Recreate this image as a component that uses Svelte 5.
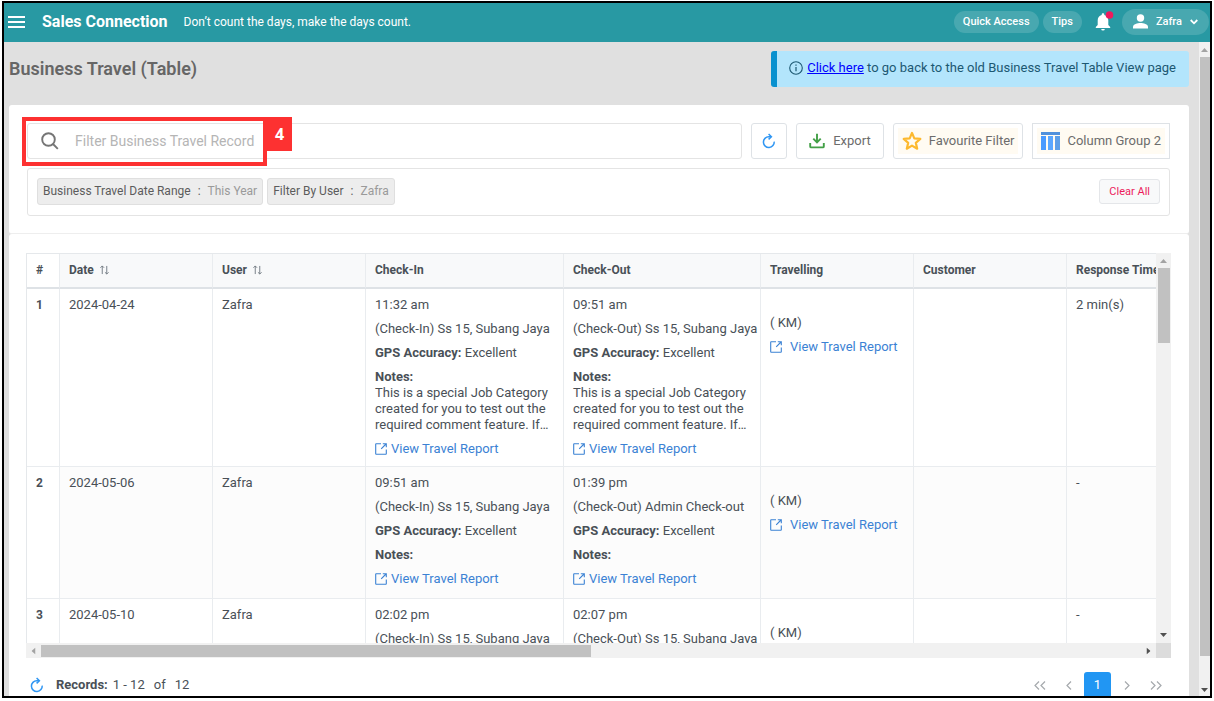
<script>
  const columns = [
    { label: '#', width: 33 },
    { label: 'Date', width: 153, sortable: true },
    { label: 'User', width: 153, sortable: true },
    { label: 'Check-In', width: 198 },
    { label: 'Check-Out', width: 197 },
    { label: 'Travelling', width: 153 },
    { label: 'Customer', width: 153 },
    { label: 'Response Time', width: 153 }
  ];

  const note = ['This is a special Job Category', 'created for you to test out the', 'required comment feature. If…'];

  const rows = [
    {
      id: 1, date: '2024-04-24', user: 'Zafra', response: '2 min(s)',
      visits: [
        { time: '11:32 am', place: '(Check-In) Ss 15, Subang Jaya', note },
        { time: '09:51 am', place: '(Check-Out) Ss 15, Subang Jaya', note }
      ]
    },
    {
      id: 2, date: '2024-05-06', user: 'Zafra', response: '-',
      visits: [
        { time: '09:51 am', place: '(Check-In) Ss 15, Subang Jaya', note: [] },
        { time: '01:39 pm', place: '(Check-Out) Admin Check-out', note: [] }
      ]
    },
    {
      id: 3, date: '2024-05-10', user: 'Zafra', response: '-',
      visits: [
        { time: '02:02 pm', place: '(Check-In) Ss 15, Subang Jaya', note: [] },
        { time: '02:07 pm', place: '(Check-Out) Ss 15, Subang Jaya', note: [] }
      ]
    }
  ];

  const filters = [
    { name: 'Business Travel Date Range', value: 'This Year' },
    { name: 'Filter By User', value: 'Zafra' }
  ];

  let query = $state('');
</script>

{#snippet refreshIcon()}
  <svg width="14" height="16" viewBox="0 0 14 16" fill="none" stroke="#2f96f3" stroke-width="1.5" aria-hidden="true">
    <path d="M12.2 8.6A5.4 5.4 0 1 1 6.8 3.7H9" />
    <path d="M6.6 1 9.4 3.7 6.6 6.4" />
  </svg>
{/snippet}

{#snippet externalIcon()}
  <svg width="12" height="12" viewBox="0 0 12 12" fill="none" stroke="currentColor" stroke-width="1.1" aria-hidden="true">
    <path d="M6 .8H1.2a.5.5 0 0 0-.5.5v9.5a.5.5 0 0 0 .5.5h9.6a.5.5 0 0 0 .5-.5V6.5" />
    <path d="M7.8.8h3.5v3.5M11 1 6.2 5.8" />
  </svg>
{/snippet}

{#snippet arrow(dir, tone)}
  <svg class="arrow {dir}" width="7" height="4" viewBox="0 0 7 4" fill={tone} aria-hidden="true"><path d="M0 4 3.5 0 7 4z" /></svg>
{/snippet}

{#snippet visit(v)}
  <div class="visit">
    <p>{v.time}</p>
    <p>{v.place}</p>
    <p><b>GPS Accuracy:</b> Excellent</p>
    <div>
      <p><b>Notes:</b></p>
      {#each v.note as line}
        <p>{line}</p>
      {/each}
    </div>
    <a class="report" href="#report">{@render externalIcon()}View Travel Report</a>
  </div>
{/snippet}

<div class="frame">
  <header class="topbar">
    <button class="plain" aria-label="Menu">
      <svg width="17" height="12" viewBox="0 0 17 12" fill="#fff"><path d="M0 0h17v2H0zM0 5h17v2H0zM0 10h17v2H0z" /></svg>
    </button>
    <strong class="brand">Sales Connection</strong>
    <span class="tagline">Don’t count the days, make the days count.</span>
    <nav>
      <button class="pill">Quick Access</button>
      <button class="pill">Tips</button>
      <button class="plain bell" aria-label="Notifications">
        <svg width="20" height="22" viewBox="0 0 20 22">
          <path fill="#fff" d="M9 2.200c.8 0 1.300.5 1.300 1.200v.7c2.700.6 4 2.800 4 5.300v4.600l1.900 2v1H1.800v-1l1.900-2v-4.600c0-2.500 1.400-4.700 4-5.300v-.7C7.700 2.700 8.200 2.200 9 2.200zM7.200 17.900h3.600a1.800 1.600 0 0 1-3.600 0z" />
          <circle cx="15.500" cy="4" r="3.800" fill="#f0195c" />
        </svg>
      </button>
      <button class="pill account">
        <svg width="15" height="15" viewBox="0 0 15 15" fill="#fff" aria-hidden="true"><circle cx="7.500" cy="4" r="3.700" /><path d="M0 14.600v-1.700C0 10.300 4.500 9.100 7.500 9.100S15 10.300 15 12.900v1.700z" /></svg>
        Zafra
        <svg width="8" height="6" viewBox="0 0 8 6" fill="none" stroke="#fff" stroke-width="1.800" aria-hidden="true"><path d="M.7 1 4 4.300 7.300 1" /></svg>
      </button>
    </nav>
  </header>

  <div class="body">
    <main>
      <div class="heading">
        <h1>Business Travel (Table)</h1>
        <div class="notice">
          <svg width="14" height="14" viewBox="0 0 14 14" fill="none" stroke="#1c5872" aria-hidden="true"><circle cx="7" cy="7" r="6.300" stroke-width="1.100" /><path d="M7 6v4.300M7 3.400v1.300" stroke-width="1.200" /></svg>
          <span><a href="#old-view">Click here</a> to go back to the old Business Travel Table View page</span>
        </div>
      </div>

      <section class="card tools">
        <div class="toolbar">
          <div class="search">
            <svg width="18" height="18" viewBox="0 0 18 18" fill="none" stroke="#757575" stroke-width="1.900" aria-hidden="true"><circle cx="7.500" cy="7.500" r="6.300" /><path d="m12 12 4.800 4.800" /></svg>
            <input type="text" aria-label="Filter Business Travel Record" placeholder="Filter Business Travel Record" bind:value={query} />
            <div class="callout"><span>4</span></div>
          </div>
          <button class="tool refresh" aria-label="Refresh">{@render refreshIcon()}</button>
          <button class="tool export">
            <svg width="16" height="16" viewBox="0 0 16 16" fill="none" stroke="#43a047" stroke-width="1.900" aria-hidden="true"><path d="M8 .8v8M4.300 5.600 8 9.300l3.700-3.700M1.200 10v3.400q0 1 1 1h11.600q1 0 1-1V10" /></svg>
            Export
          </button>
          <button class="tool tinted"><span>
            <svg width="20" height="20" viewBox="0 0 20 20" fill="none" stroke="#fdb92e" stroke-width="2.200" stroke-linejoin="round" aria-hidden="true"><path d="m10 1.900 2.300 5.500 6 .5-4.500 3.900 1.400 5.900L10 14.600l-5.200 3.100 1.400-5.900L1.700 7.900l6-.5z" /></svg>
            Favourite Filter
          </span></button>
          <button class="tool tinted square"><span>
            <svg width="19" height="18" viewBox="0 0 19 18" aria-hidden="true"><path fill="#5091dc" d="M0 0h19v3H0z" /><path fill="#4a9bff" d="M0 4h5v14H0z" /><path fill="#5ba7ff" d="M7 4h5v14H7z" /><path fill="#5d9fe8" d="M14 4h5v14h-5z" /></svg>
            Column Group 2
          </span></button>
        </div>
        <div class="filters">
          {#each filters as f}
            <span class="chip"><span>{f.name}</span><span>:</span><i>{f.value}</i></span>
          {/each}
          <button class="clear">Clear All</button>
        </div>
      </section>

      <section class="card listing">
        <div class="grid">
          <div class="viewport">
            <table>
              <colgroup>
                {#each columns as c}<col style="width: {c.width}px" />{/each}
              </colgroup>
              <thead>
                <tr>
                  {#each columns as c}
                    <th scope="col">
                      {c.label}
                      {#if c.sortable}
                        <svg class="sort" width="9" height="10" viewBox="0 0 10 10" fill="none" stroke="#6c757d" aria-hidden="true"><path d="M2.500 9.500v-9M.5 2.500l2-2 2 2M7.500.5v9M5.500 7.500l2 2 2-2" /></svg>
                      {/if}
                    </th>
                  {/each}
                </tr>
              </thead>
              <tbody>
                {#each rows as r}
                  <tr>
                    <th scope="row">{r.id}</th>
                    <td>{r.date}</td>
                    <td>{r.user}</td>
                    {#each r.visits as v}<td>{@render visit(v)}</td>{/each}
                    <td class="travel">
                      <p>( KM)</p>
                      <a class="report wide" href="#report">{@render externalIcon()}View Travel Report</a>
                    </td>
                    <td></td>
                    <td>{r.response}</td>
                  </tr>
                {/each}
              </tbody>
            </table>
          </div>
          <div class="vbar">{@render arrow('up', '#a3a3a3')}<i></i>{@render arrow('down', '#505050')}</div>
          <div class="hbar">{@render arrow('left', '#a3a3a3')}<i></i>{@render arrow('right', '#505050')}</div>
          <div class="corner"></div>
        </div>

        <footer>
          <button class="plain" aria-label="Reload records">{@render refreshIcon()}</button>
          <p class="records"><b>Records:</b><span>1 - 12</span><span>of</span><span>12</span></p>
          <nav class="pager" aria-label="Pages">
            <button aria-label="First page"><svg width="12" height="9" viewBox="0 0 12 9"><path d="M5 .5 1 4.500l4 4M11 .5 7 4.500l4 4" /></svg></button>
            <button aria-label="Previous page"><svg width="6" height="9" viewBox="0 0 6 9"><path d="M5 .5 1 4.500l4 4" /></svg></button>
            <button class="current" aria-current="page">1</button>
            <button aria-label="Next page"><svg width="6" height="9" viewBox="0 0 6 9"><path d="m1 .5 4 4-4 4" /></svg></button>
            <button aria-label="Last page"><svg width="12" height="9" viewBox="0 0 12 9"><path d="m1 .5 4 4-4 4M7 .5l4 4-4 4" /></svg></button>
          </nav>
        </footer>
      </section>
    </main>
    <div class="pagebar">{@render arrow('up', '#a3a3a3')}<i></i>{@render arrow('down', '#505050')}</div>
  </div>
</div>

<style>
  :global(body) { margin: 0; background: #fff; overflow: hidden; }
  * { box-sizing: border-box; }
  p, h1 { margin: 0; }
  svg { display: block; flex: none; }
  button, input { font: inherit; }
  button { cursor: pointer; }

  .frame {
    display: flex;
    flex-direction: column;
    height: calc(100vh - 4px);
    margin: 1px 2px 3px;
    border: 2px solid #000;
    overflow: hidden;
    font: 13px/16px Roboto, "Liberation Sans", sans-serif;
    color: #495057;
  }
  .plain { display: flex; padding: 0; border: 0; background: none; }

  .topbar {
    flex: none;
    display: flex;
    align-items: center;
    height: 39px;
    padding: 0 1px 2px 4px;
    background: #2899a3;
    color: #fff;
    font-size: 12px;
  }
  .brand { margin: 0 16px 0 17px; font-size: 16px; font-weight: 700; }
  .topbar nav { display: flex; align-items: center; margin-left: auto; }
  .pill {
    height: 22px;
    margin-right: 4px;
    padding: 0 9px;
    border: 0;
    border-radius: 13px;
    background: #48a8b0;
    color: #fff;
    font-size: 11px;
    font-weight: 500;
  }
  .bell { margin: 0 8px; }
  .pill.account { display: flex; align-items: center; gap: 8px; height: 26px; margin: 0; padding: 0 11px; }

  .body { flex: 1; min-height: 0; display: flex; background: #e0e0e0; }
  main { flex: 1; min-width: 0; padding: 9px 10px 0 5px; }
  .heading { display: flex; justify-content: space-between; height: 54px; }
  h1 { font-size: 18px; line-height: 36px; font-weight: 600; color: #666; }
  .notice {
    display: flex;
    align-items: center;
    gap: 4px;
    height: 36px;
    padding: 0 13px 2px 12px;
    border-left: 6px solid #0891cf;
    border-radius: 3px;
    background: #b3e5fc;
    color: #1c5872;
  }
  .notice a { color: #00f; }

  .card { background: #fff; border-radius: 3px; padding: 18px 19px 0 18px; }
  .tools { height: 129px; border-bottom: 1px solid #eee; }
  .toolbar { display: flex; gap: 9px; height: 36px; color: #6c6c6c; }
  .search {
    position: relative;
    flex: 1;
    display: flex;
    align-items: center;
    gap: 16px;
    padding-left: 13px;
    border: 1px solid #e4e4e4;
    border-radius: 3px;
  }
  .search input { flex: 1; min-width: 0; border: 0; outline: 0; padding: 0; background: none; color: #495057; font-size: 14px; }
  .search input::placeholder { color: #b5b5b5; opacity: 1; }
  .callout {
    position: absolute;
    left: -6px;
    top: -7px;
    width: 245px;
    height: 49px;
    border: 4px solid #fd3131;
    pointer-events: none;
  }
  .callout span {
    position: absolute;
    left: 100%;
    top: -4px;
    width: 29px;
    height: 34px;
    padding-left: 4px;
    background: #fd3131;
    color: #fff;
    font: 700 16px/34px "Open Sans", sans-serif;
    text-align: center;
  }
  .tool {
    display: flex;
    align-items: center;
    justify-content: center;
    padding: 0 4px;
    border: 1px solid #dee2e6;
    border-radius: 3px;
    background: #fff;
    color: inherit;
  }
  .refresh { width: 36px; }
  .export { gap: 8px; padding: 0 12px; }
  .tinted span { display: flex; align-items: center; gap: 7px; height: 26px; padding: 0 4px; background: #fffbf2; }
  .square { border-radius: 0; }
  .filters {
    display: flex;
    align-items: center;
    gap: 4px;
    height: 48px;
    margin-top: 9px;
    padding: 0 9px 1px;
    border: 1px solid #e4e4e4;
    border-radius: 3px;
  }
  .chip { display: flex; gap: 7px; height: 27px; padding: 0 5px; border: 1px solid #dfdfdf; border-radius: 3px; background: #ededed; line-height: 24px; color: #5c5c5c; font-size: 12px; }
  .chip i { font-style: normal; color: #9a9a9a; }
  .clear { height: 25px; margin-left: auto; padding: 0 9px; border: 1px solid #e4e6e9; border-radius: 3px; background: #f8f9fa; color: #ec1c5c; font-size: 11px; }

  .grid { display: grid; grid-template: minmax(0, 1fr) 15px / minmax(0, 1fr) 15px; height: calc(100vh - 296px); }
  .listing { padding-top: 19px; padding-left: 17px; padding-right: 18px; }
  .viewport { overflow: hidden; border-top: 1px solid #e5e8eb; border-left: 1px solid #e5e8eb; }
  table { width: 1193px; table-layout: fixed; border-collapse: separate; border-spacing: 0; }
  th, td {
    padding: 8px 0 9px 9px;
    border: solid #e9ecef;
    border-width: 0 1px 1px 0;
    vertical-align: top;
    text-align: left;
    white-space: nowrap;
  }
  th { font-weight: 700; font-size: 12px; }
  td { height: 132px; }
  thead th { height: 35px; border-bottom: 2px solid #dee2e6; background: #f8f9fa; }
  thead th:first-child { background: #fff; }
  tbody tr:nth-child(even) td { background: #fcfcfc; }
  .sort { display: inline-block; margin-left: 3px; vertical-align: -1px; }
  .visit { display: grid; row-gap: 8px; }
  .report { display: flex; align-items: center; gap: 4px; color: #3b82d4; text-decoration: none; }
  td.travel { padding-top: 26px; }
  .wide { gap: 8px; margin-top: 8px; }

  .vbar, .hbar, .pagebar { display: flex; align-items: center; background: #f1f1f1; }
  .vbar, .pagebar { flex-direction: column; padding: 6px 0; }
  .vbar i { width: 12px; height: 75px; margin: 5px 0 auto; background: #c1c1c1; }
  .hbar { padding: 0 4px; }
  .hbar i { width: 49%; height: 12px; margin: 0 auto 0 4px; background: #c1c1c1; }
  .corner { background: #dcdcdc; }
  .pagebar { flex: none; width: 11px; padding-bottom: 4px; }
  .pagebar i { width: 10px; height: 93%; margin: 5px 0 auto; background: #c1c1c1; }
  .arrow { flex: none; }
  .down { transform: rotate(180deg); }
  .left { transform: rotate(-90deg); }
  .right { transform: rotate(90deg); }

  footer { display: flex; align-items: center; height: 54px; padding: 0 2px 0 4px; }
  .records { display: flex; gap: 9px; margin-left: 12px; }
  .records b { margin-right: -4px; }
  .pager { display: flex; gap: 2px; margin-left: auto; }
  .pager button {
    display: flex;
    align-items: center;
    justify-content: center;
    width: 27px;
    height: 27px;
    padding: 0;
    border: 0;
    border-radius: 3px;
    background: none;
  }
  .pager svg { fill: none; stroke: #a5a9ad; stroke-width: 1.2; }
  .pager .current { background: #2196f3; color: #fff; }
</style>
